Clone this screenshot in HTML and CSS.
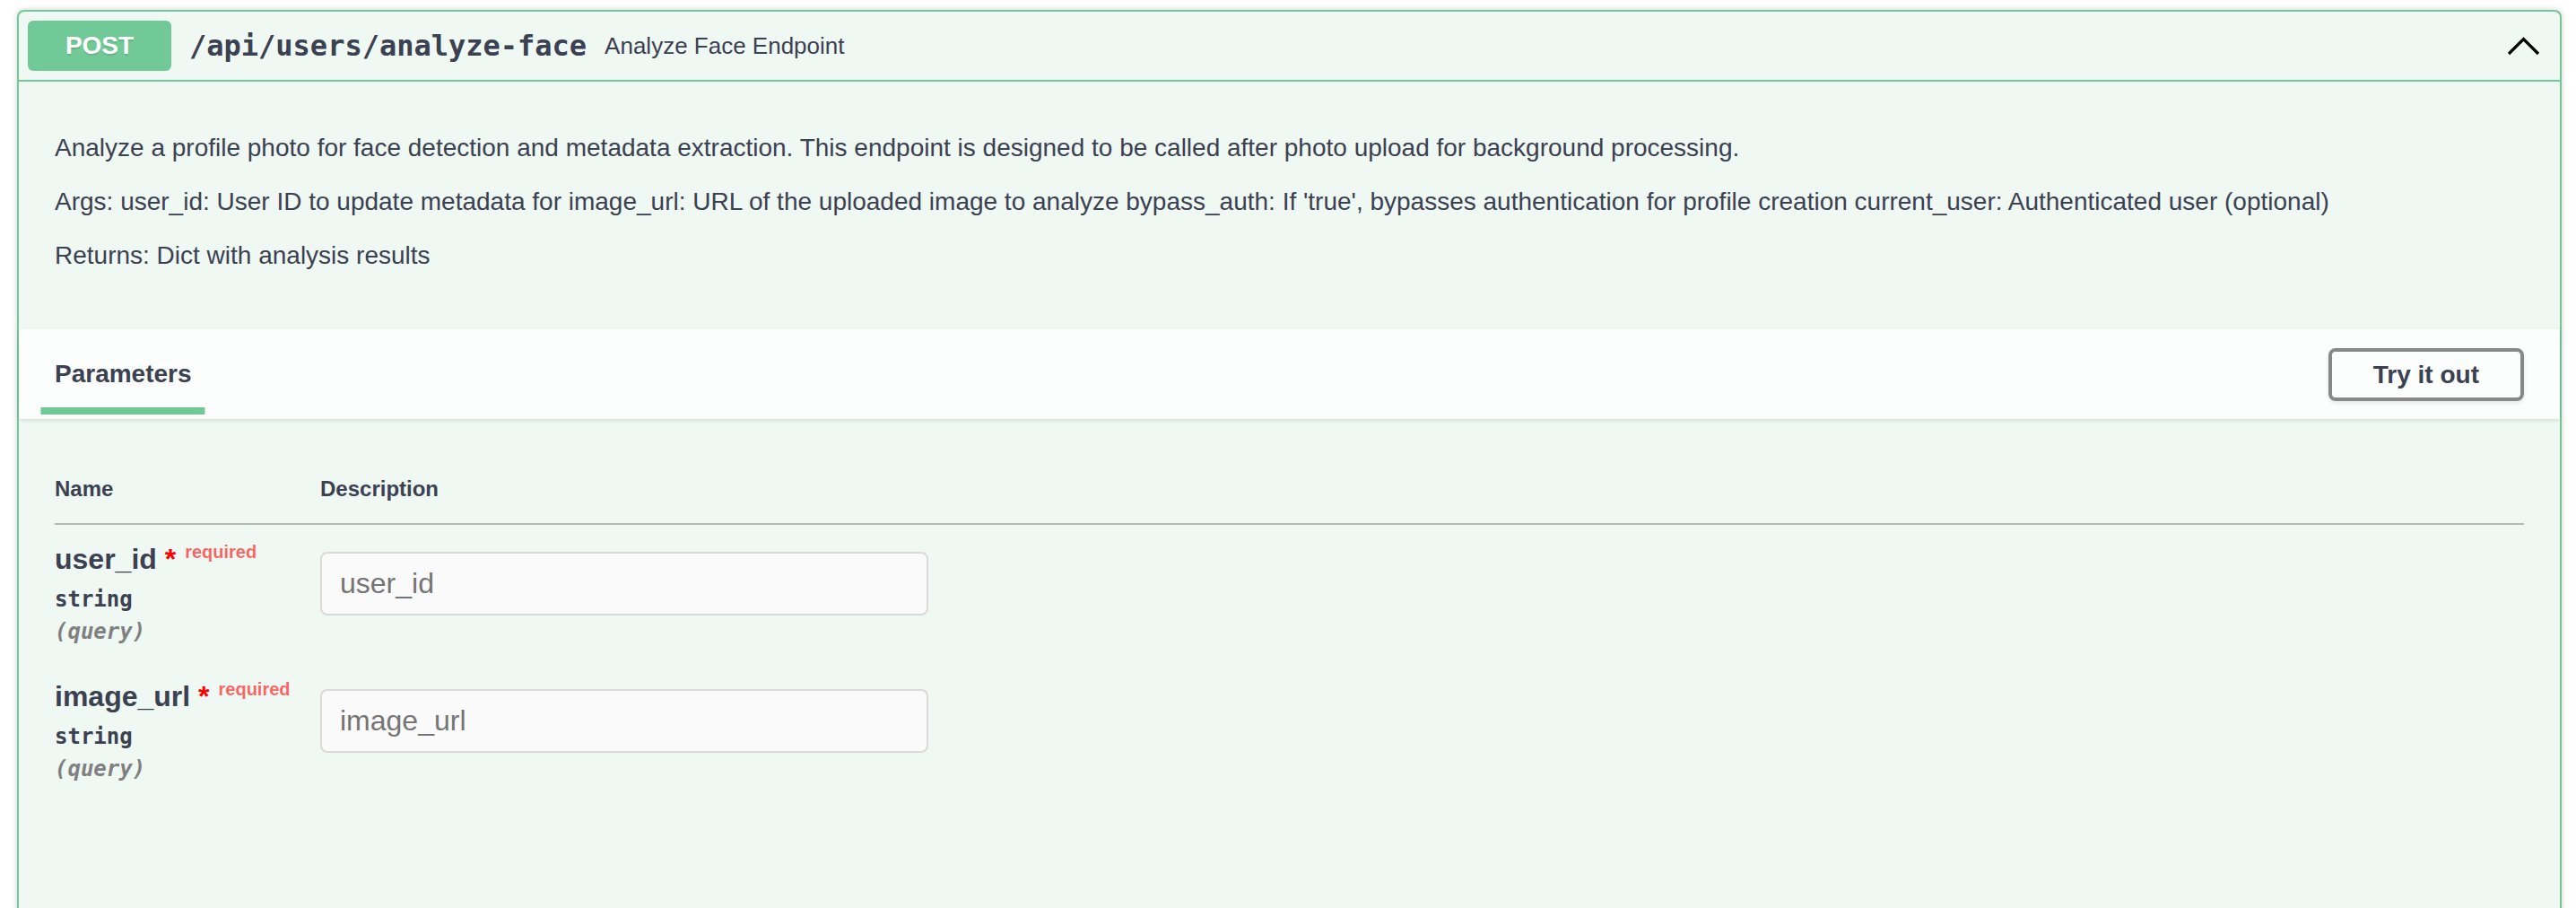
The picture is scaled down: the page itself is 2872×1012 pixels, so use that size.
FILE: index.html
```html
<!DOCTYPE html>
<html>
<head>
<meta charset="utf-8">
<title>Analyze Face Endpoint</title>
<link rel="stylesheet" href="styles.css">
</head>
<body>
<div class="wrapper">
  <div class="opblock">
    <div class="summary">
      <span class="method">POST</span>
      <span class="path">/api/users/analyze-face</span>
      <span class="summary-desc">Analyze Face Endpoint</span>
      <svg class="arrow" width="40" height="24" viewBox="0 0 40 24" aria-hidden="true"><polyline points="3,21 19.5,4.5 36,21" fill="none" stroke="#000" stroke-width="3.2"/></svg>
    </div>
    <div class="body">
      <div class="desc">
        <p>Analyze a profile photo for face detection and metadata extraction. This endpoint is designed to be called after photo upload for background processing.</p>
        <p>Args: user_id: User ID to update metadata for image_url: URL of the uploaded image to analyze bypass_auth: If 'true', bypasses authentication for profile creation current_user: Authenticated user (optional)</p>
        <p>Returns: Dict with analysis results</p>
      </div>
      <div class="section-header">
        <div class="tab"><h4 class="tab-title"><span class="tab-label">Parameters</span></h4></div>
        <button class="try-btn">Try it out</button>
      </div>
      <div class="table-container">
        <table class="params">
          <thead>
            <tr><th class="col-name">Name</th><th>Description</th></tr>
          </thead>
          <tbody>
            <tr>
              <td class="col-name">
                <div class="pname">user_id<span class="star">&nbsp;*</span><span class="req">required</span></div>
                <div class="ptype">string</div>
                <div class="pin">(query)</div>
              </td>
              <td><input class="pinput" type="text" placeholder="user_id"></td>
            </tr>
            <tr>
              <td class="col-name">
                <div class="pname">image_url<span class="star">&nbsp;*</span><span class="req">required</span></div>
                <div class="ptype">string</div>
                <div class="pin">(query)</div>
              </td>
              <td><input class="pinput" type="text" placeholder="image_url"></td>
            </tr>
          </tbody>
        </table>
      </div>
    </div>
  </div>
</div>
</body>
</html>
```

FILE: styles.css
```css
html, body {
  margin: 0;
  background: #fff;
}
body {
  font-family: "Liberation Sans", Arial, sans-serif;
  color: #3b4151;
}
.wrapper {
  padding: 11px 16px 0 19px;
}
.opblock {
  border: 2px solid #70c996;
  border-radius: 8px;
  background: #eff8f3;
  box-shadow: 0 0 6px rgba(0, 0, 0, 0.19);
}
.summary {
  display: flex;
  align-items: center;
  padding: 10px;
  border-bottom: 2px solid #70c996;
}
.method {
  min-width: 160px;
  padding: 12px 0;
  background: #70c996;
  border-radius: 6px;
  color: #fff;
  font-size: 28px;
  line-height: 32px;
  font-weight: 700;
  text-align: center;
  text-shadow: 0 2px 0 rgba(0, 0, 0, 0.1);
}
.path {
  font-family: "DejaVu Sans Mono", "Liberation Mono", monospace;
  font-size: 32px;
  font-weight: 700;
  padding: 0 20px;
  color: #3b4151;
}
.summary-desc {
  flex: 1 1 auto;
  font-size: 26px;
  color: #3b4151;
}
.arrow {
  flex-shrink: 0;
  margin-right: 10px;
}
.desc {
  padding: 30px 40px;
  margin-bottom: 8px;
}
.desc p {
  font-size: 28px;
  line-height: 32px;
  margin: 28px 0;
}
.section-header {
  display: flex;
  align-items: center;
  justify-content: space-between;
  box-sizing: border-box;
  min-height: 100px;
  padding: 16px 40px;
  background: rgba(255, 255, 255, 0.8);
  box-shadow: 0 2px 4px rgba(0, 0, 0, 0.1);
}
.tab-title {
  margin: 0;
  font-size: 28px;
  line-height: 32px;
  font-weight: 700;
}
.tab-label {
  position: relative;
}
.tab-label::after {
  content: "";
  position: absolute;
  left: 50%;
  bottom: -30px;
  width: 120%;
  height: 8px;
  transform: translateX(-50%);
  background: #70c996;
}
.try-btn {
  font-family: "Liberation Sans", Arial, sans-serif;
  font-size: 28px;
  line-height: 31px;
  font-weight: 700;
  color: #3b4151;
  background: transparent;
  border: 4px solid #888;
  border-radius: 8px;
  padding: 10px 46px;
  box-shadow: 0 2px 4px rgba(0, 0, 0, 0.1);
}
.table-container {
  padding: 40px 40px 300px;
}
.params {
  width: 100%;
  border-collapse: collapse;
}
.params th {
  font-size: 24px;
  line-height: 28px;
  font-weight: 700;
  text-align: left;
  padding: 24px 0;
  border-bottom: 2px solid #b3b9b8;
}
.params .col-name {
  width: 296px;
}
.params td {
  padding: 20px 0;
  vertical-align: top;
}
.pname {
  font-size: 32px;
  line-height: 36px;
  font-weight: 700;
  white-space: nowrap;
}
.star {
  color: #ff0000;
}
.req {
  position: relative;
  top: -12px;
  padding: 10px;
  font-size: 20px;
  font-weight: 700;
  color: rgba(255, 0, 0, 0.6);
}
.ptype {
  font-family: "DejaVu Sans Mono", "Liberation Mono", monospace;
  font-size: 24px;
  line-height: 28px;
  font-weight: 700;
  padding: 9px 0;
}
.pin {
  font-family: "DejaVu Sans Mono", "Liberation Mono", monospace;
  font-size: 24px;
  line-height: 27px;
  font-weight: 700;
  font-style: italic;
  color: #808080;
}
.pinput {
  box-sizing: border-box;
  width: 678px;
  height: 71px;
  margin: 10px 0;
  padding: 16px 20px;
  border: 2px solid #d9d9d9;
  border-radius: 8px;
  background: #fafafa;
  font-family: "Liberation Sans", Arial, sans-serif;
  font-size: 32px;
  color: #3b4151;
  outline: none;
}
.pinput::placeholder {
  color: #757575;
}
```
